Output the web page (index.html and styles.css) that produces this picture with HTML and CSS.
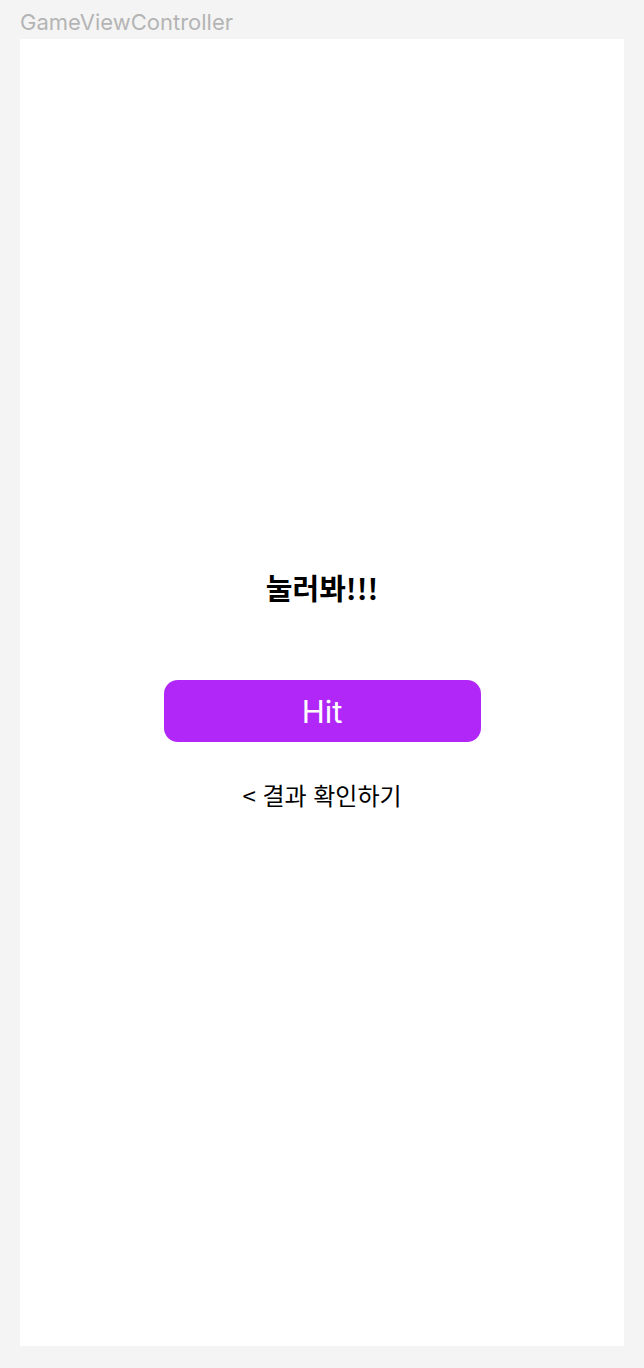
FILE: index.html
```html
<!DOCTYPE html>
<html lang="ko">
<head>
  <meta charset="UTF-8" />
  <meta name="viewport" content="width=device-width, initial-scale=1.0"/>
  <title>GameViewController</title>
  <link rel="stylesheet" href="styles.css">
</head>
<body>
  <div class="scene-label">GameViewController</div>
  <div class="screen">
    <h2 class="title">눌러봐!!!</h2>
    <button class="hit-btn">Hit</button>
    <a class="result-link" href="#">&lt; 결과 확인하기</a>
  </div>
</body>
</html>
```

FILE: styles.css
```css
body {
  margin: 0;
  padding: 0 20px 22px;
  background: #f4f4f4;
  font-family: 'Inter', 'Noto Sans CJK KR', sans-serif;
}
.scene-label {
  height: 39px;
  line-height: 44px;
  font-size: 22px;
  color: #b4b4b4;
}
.screen {
  box-sizing: border-box;
  height: 1307px;
  padding-bottom: 5px;
  background: #ffffff;
  display: flex;
  flex-direction: column;
  align-items: center;
  justify-content: center;
}
.title {
  margin: 0 0 76px;
  font-family: 'Noto Sans CJK KR', sans-serif;
  font-size: 29px;
  font-weight: bold;
  line-height: 34px;
  color: #000;
}
.hit-btn {
  width: 317px;
  height: 62px;
  border: none;
  border-radius: 14px;
  background: #b027f7;
  color: white;
  font-family: 'Inter', sans-serif;
  font-size: 31px;
  cursor: pointer;
}
.result-link {
  margin-top: 38px;
  line-height: 30px;
  font-family: 'Noto Sans CJK KR', sans-serif;
  font-size: 24px;
  color: #000;
  text-decoration: none;
}
```
